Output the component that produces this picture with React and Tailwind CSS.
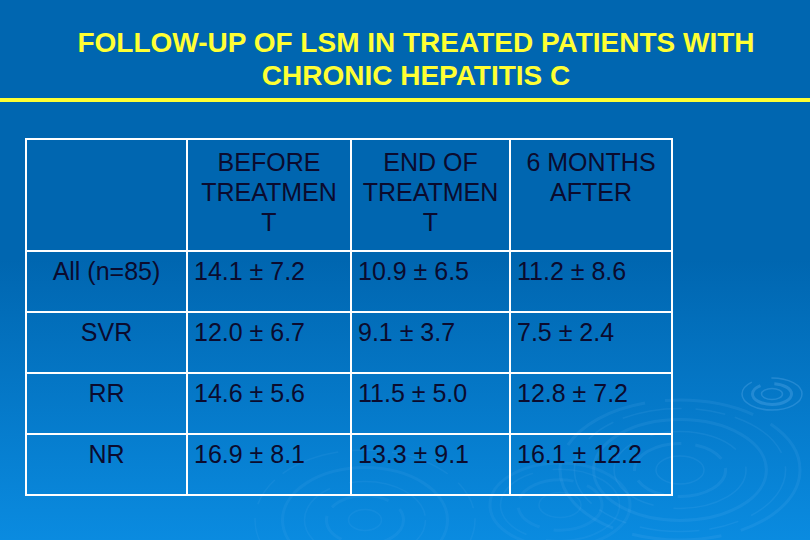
const rows = [
  ["All (n=85)", "14.1 ± 7.2", "10.9 ± 6.5", "11.2 ± 8.6"],
  ["SVR", "12.0 ± 6.7", "9.1 ± 3.7", "7.5 ± 2.4"],
  ["RR", "14.6 ± 5.6", "11.5 ± 5.0", "12.8 ± 7.2"],
  ["NR", "16.9 ± 8.1", "13.3 ± 9.1", "16.1 ± 12.2"],
];

const headers = [
  ["BEFORE", "TREATMEN", "T"],
  ["END OF", "TREATMEN", "T"],
  ["6 MONTHS", "AFTER"],
];

function Ripple({ cx, cy, rx, ry, rings, opacity }) {
  return (
    <g opacity={opacity} fill="none" stroke="#8fcaff">
      {rings.map((r, i) => (
        <ellipse
          key={i}
          cx={cx}
          cy={cy}
          rx={rx * r}
          ry={ry * r}
          strokeWidth={i % 2 ? 3 : 1.5}
          strokeDasharray={i % 3 === 1 ? "60 14 30 10" : i % 3 === 2 ? "90 20" : "none"}
        />
      ))}
    </g>
  );
}

function Background() {
  return (
    <svg className="absolute inset-0 pointer-events-none" width="810" height="540" viewBox="0 0 810 540">
      <Ripple cx={772} cy={394} rx={30} ry={16} rings={[0.35, 0.65, 1]} opacity={0.22} />
      <Ripple cx={680} cy={470} rx={120} ry={70} rings={[0.2, 0.38, 0.55, 0.72, 0.88, 1]} opacity={0.09} />
      <Ripple cx={560} cy={505} rx={70} ry={42} rings={[0.3, 0.6, 0.85, 1]} opacity={0.07} />
      <Ripple cx={365} cy={520} rx={110} ry={70} rings={[0.15, 0.35, 0.55, 0.75, 1]} opacity={0.07} />
    </svg>
  );
}

export default function App() {
  return (
    <div
      className="relative w-[810px] h-[540px] overflow-hidden bg-[linear-gradient(180deg,#0066b0_0%,#0066b0_48%,#0a8be0_100%)]"
      style={{ fontFamily: '"Liberation Sans", Arial, sans-serif' }}
    >
      <Background />
      <div className="relative">
        <div className="pt-[26px] pl-[22px] text-center text-[28px] leading-[33px] font-bold text-[#ffff33]">
          <div>FOLLOW-UP OF LSM IN TREATED PATIENTS WITH</div>
          <div>CHRONIC HEPATITIS C</div>
        </div>
        <div className="mt-[6px] h-[4px] bg-[#ffff33]" />

        <div className="mt-[36px] ml-[25px] w-max grid grid-cols-[161px_164px_159px_162px] border-t-2 border-l-2 border-white text-[25px] leading-[30px] text-[#0b0b2e]">
          <div className="h-[112px] border-r-2 border-b-2 border-white" />
          {headers.map((h, i) => (
            <div key={i} className="h-[112px] pt-[7px] border-r-2 border-b-2 border-white text-center">
              {h.map((line, j) => (
                <div key={j}>{line}</div>
              ))}
            </div>
          ))}
          {rows.map((r, i) =>
            r.map((cell, j) => (
              <div
                key={i + "-" + j}
                className={
                  "h-[61px] pt-[4px] border-r-2 border-b-2 border-white whitespace-nowrap " +
                  (j === 0 ? "text-center" : "pl-[6px]")
                }
              >
                {cell}
              </div>
            ))
          )}
        </div>
      </div>
    </div>
  );
}
